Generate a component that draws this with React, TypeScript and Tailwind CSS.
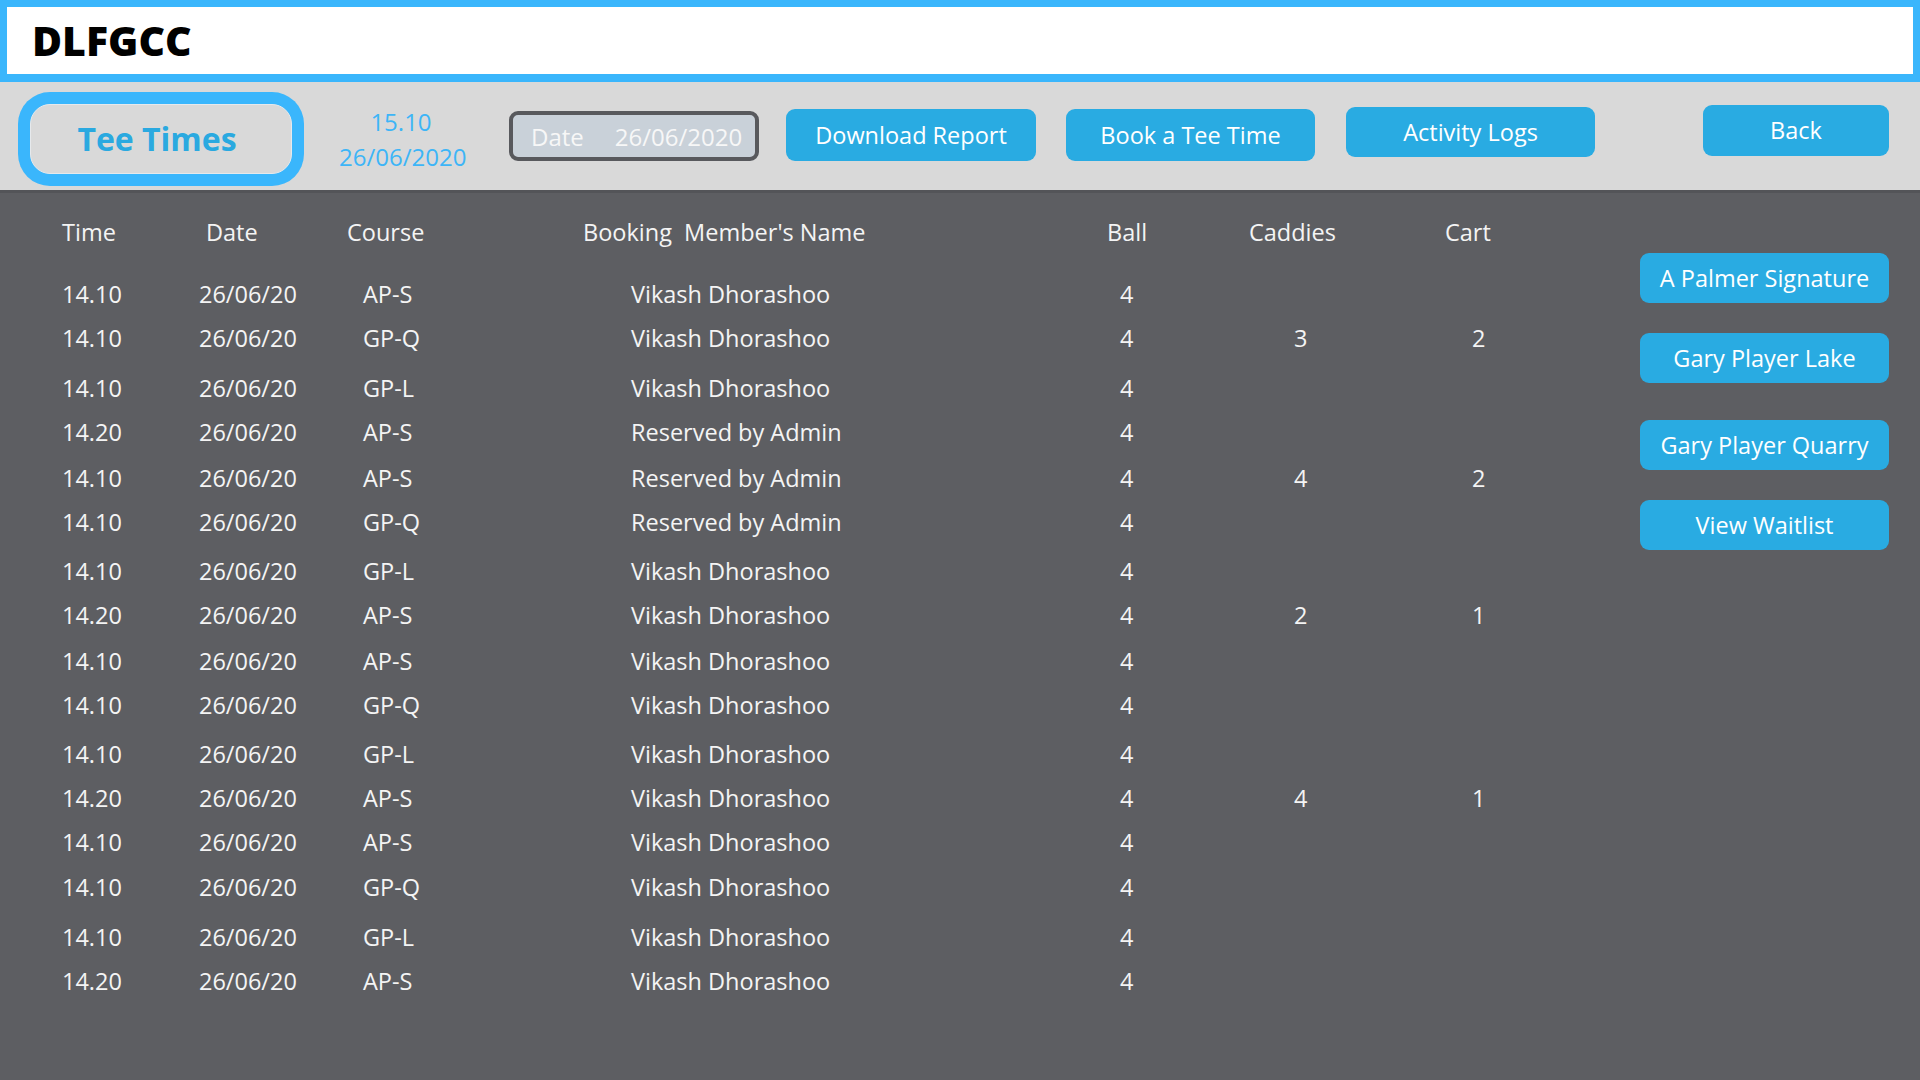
const rows = [
  { time: '14.10', course: 'AP-S', name: 'Vikash Dhorashoo', caddies: '', cart: '', h: 44 },
  { time: '14.10', course: 'GP-Q', name: 'Vikash Dhorashoo', caddies: '3', cart: '2', h: 50 },
  { time: '14.10', course: 'GP-L', name: 'Vikash Dhorashoo', caddies: '', cart: '', h: 44 },
  { time: '14.20', course: 'AP-S', name: 'Reserved by Admin', caddies: '', cart: '', h: 46 },
  { time: '14.10', course: 'AP-S', name: 'Reserved by Admin', caddies: '4', cart: '2', h: 44 },
  { time: '14.10', course: 'GP-Q', name: 'Reserved by Admin', caddies: '', cart: '', h: 49 },
  { time: '14.10', course: 'GP-L', name: 'Vikash Dhorashoo', caddies: '', cart: '', h: 44 },
  { time: '14.20', course: 'AP-S', name: 'Vikash Dhorashoo', caddies: '2', cart: '1', h: 46 },
  { time: '14.10', course: 'AP-S', name: 'Vikash Dhorashoo', caddies: '', cart: '', h: 44 },
  { time: '14.10', course: 'GP-Q', name: 'Vikash Dhorashoo', caddies: '', cart: '', h: 49 },
  { time: '14.10', course: 'GP-L', name: 'Vikash Dhorashoo', caddies: '', cart: '', h: 44 },
  { time: '14.20', course: 'AP-S', name: 'Vikash Dhorashoo', caddies: '4', cart: '1', h: 44 },
  { time: '14.10', course: 'AP-S', name: 'Vikash Dhorashoo', caddies: '', cart: '', h: 45 },
  { time: '14.10', course: 'GP-Q', name: 'Vikash Dhorashoo', caddies: '', cart: '', h: 50 },
  { time: '14.10', course: 'GP-L', name: 'Vikash Dhorashoo', caddies: '', cart: '', h: 44 },
  { time: '14.20', course: 'AP-S', name: 'Vikash Dhorashoo', caddies: '', cart: '', h: 44 },
];

const gridCols = 'grid grid-cols-[137px_148px_236px_524px_142px_196px_95px]';

function BlueButton({ label, className = '' }: { label: string; className?: string }) {
  return (
    <button
      className={`flex items-center justify-center rounded-[9px] bg-[#29abe2] text-[23.5px] leading-[33px] text-white ${className}`}
    >
      {label}
    </button>
  );
}

export default function App() {
  return (
    <div className="flex h-[1080px] w-[1920px] flex-col overflow-hidden font-['Open_Sans',sans-serif]">
      {/* ===== Title bar ===== */}
      <header className="flex h-[82px] items-center border-[7px] border-b-8 border-[#3ab6fc] bg-white pl-[25px]">
        <h1 className="text-[41px] font-extrabold leading-none text-black">DLFGCC</h1>
      </header>

      {/* ===== Toolbar ===== */}
      <div className="flex h-[108px] items-start bg-[#d9d9d9]">
        <div className="ml-[18px] mt-[10px] h-[94px] w-[286px] rounded-[32px] bg-[#3ab6fc] p-[12px]">
          <div className="flex h-full items-center justify-center rounded-[20px] border border-[#e6e9ec] bg-[#d9d9d9] pr-[8px]">
            <span className="text-[32px] font-bold leading-none text-[#2aa9e0]">Tee Times</span>
          </div>
        </div>

        <div className="ml-[35px] mt-[22px] w-[124px] text-center text-[24px] leading-[35px] text-[#3db5f7]">
          <div>15.10</div>
          <div>26/06/2020</div>
        </div>

        <div className="ml-[46px] mt-[29px] flex h-[50px] w-[250px] items-center rounded-[9px] border-4 border-[#58595d] bg-[#c9d1d9] pl-[18px] text-[24px] leading-[33px] text-[#f7f7f7]">
          <span>Date</span>
          <span className="ml-[31px]">26/06/2020</span>
        </div>

        <BlueButton label="Download Report" className="ml-[27px] mt-[27px] h-[52px] w-[250px]" />
        <BlueButton label="Book a Tee Time" className="ml-[30px] mt-[27px] h-[52px] w-[249px]" />
        <BlueButton label="Activity Logs" className="ml-[31px] mt-[25px] h-[50px] w-[249px]" />
        <BlueButton label="Back" className="ml-auto mr-[31px] mt-[23px] h-[51px] w-[186px]" />
      </div>

      {/* ===== Bookings ===== */}
      <main className="flex flex-1 border-t-[3px] border-[#535458] bg-[#5d5e62] text-[23.5px] leading-[33px] text-[#f4f4f4]">
        <div className="flex-1 pl-[62px] pt-[23px]">
          <div className={`${gridCols} h-[62px] whitespace-pre`}>
            <span>Time</span>
            <span className="pl-[7px]">Date</span>
            <span>Course</span>
            <span>Booking  Member's Name</span>
            <span>Ball</span>
            <span>Caddies</span>
            <span>Cart</span>
          </div>

          {rows.map((r, i) => (
            <div key={i} className={`${gridCols} items-start`} style={{ height: r.h }}>
              <span>{r.time}</span>
              <span>26/06/20</span>
              <span className="pl-[16px]">{r.course}</span>
              <span className="pl-[48px]">{r.name}</span>
              <span className="pl-[13px]">4</span>
              <span className="pl-[45px]">{r.caddies}</span>
              <span className="pl-[27px]">{r.cart}</span>
            </div>
          ))}
        </div>

        <aside className="mr-[31px] flex w-[249px] flex-col pt-[60px]">
          <BlueButton label="A Palmer Signature" className="h-[50px] w-full" />
          <BlueButton label="Gary Player Lake" className="mt-[30px] h-[50px] w-full" />
          <BlueButton label="Gary Player Quarry" className="mt-[37px] h-[50px] w-full" />
          <BlueButton label="View Waitlist" className="mt-[30px] h-[50px] w-full" />
        </aside>
      </main>
    </div>
  );
}
